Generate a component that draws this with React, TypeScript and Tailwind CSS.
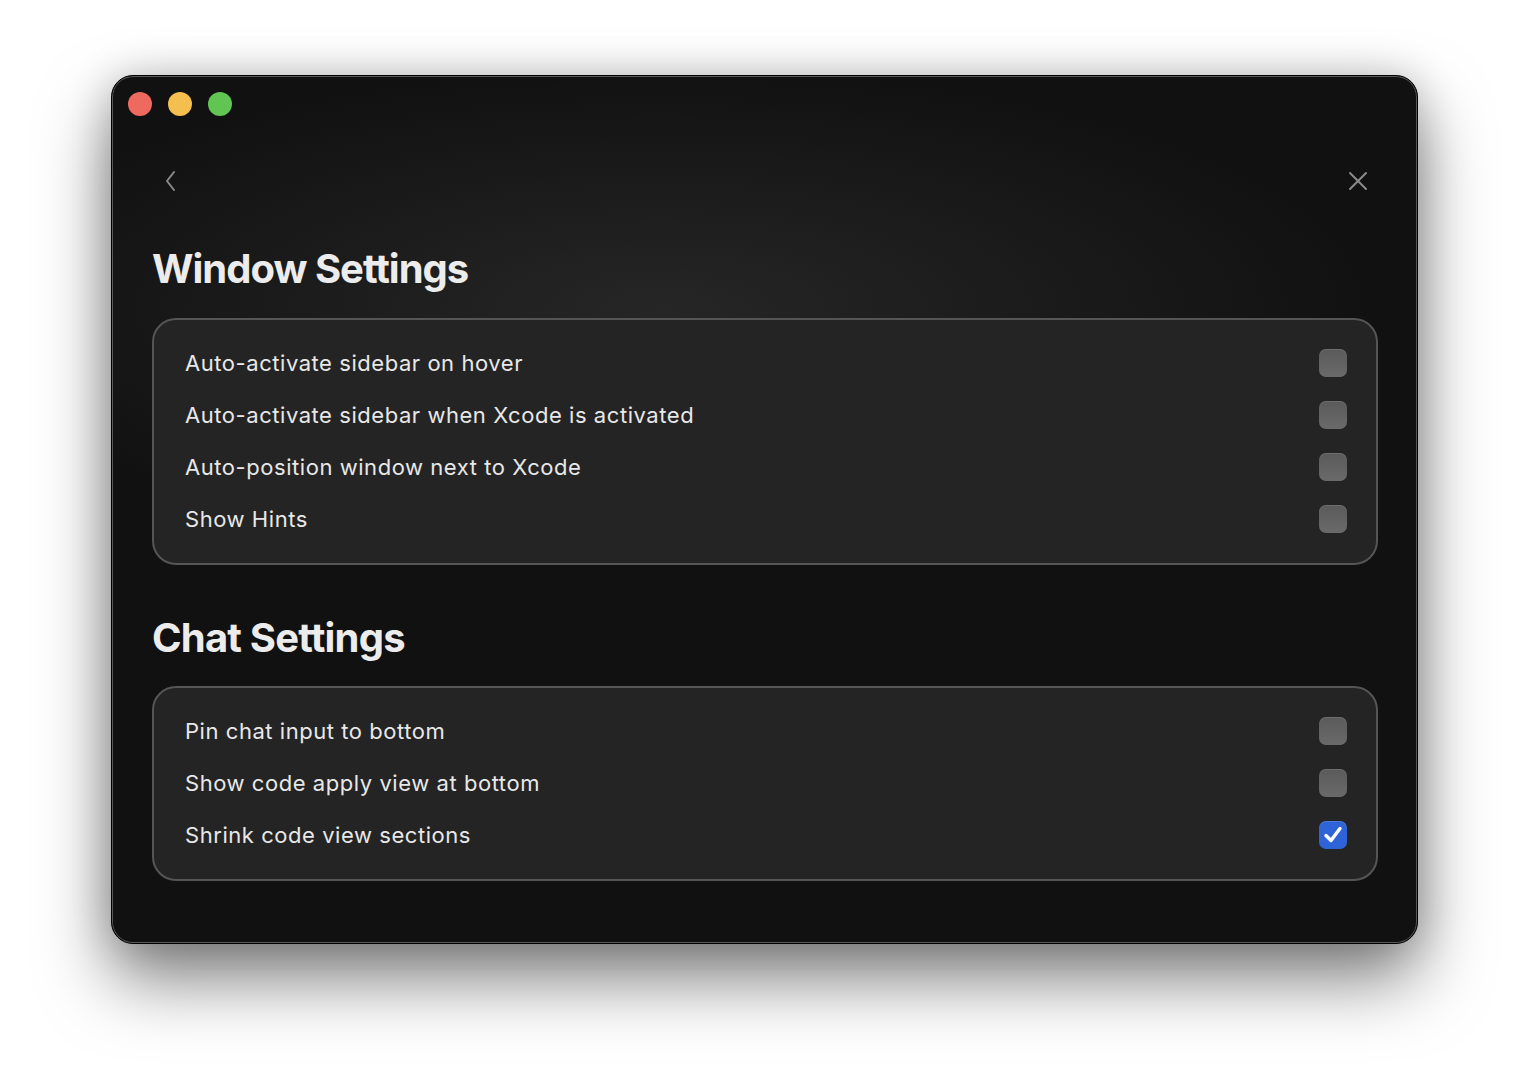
import { useState } from 'react'

// Settings window: macOS-style dark panel with two groups of checkboxes.
const WINDOW_OPTIONS = [
  { id: 'hover', label: 'Auto-activate sidebar on hover', on: false },
  { id: 'xcode', label: 'Auto-activate sidebar when Xcode is activated', on: false },
  { id: 'position', label: 'Auto-position window next to Xcode', on: false },
  { id: 'hints', label: 'Show Hints', on: false },
]

const CHAT_OPTIONS = [
  { id: 'pin', label: 'Pin chat input to bottom', on: false },
  { id: 'apply', label: 'Show code apply view at bottom', on: false },
  { id: 'shrink', label: 'Shrink code view sections', on: true },
]

type Option = { id: string; label: string; on: boolean }

function Checkbox({ checked, onClick }: { checked: boolean; onClick: () => void }) {
  if (checked) {
    return (
      <button
        onClick={onClick}
        className="flex h-[28px] w-[28px] items-center justify-center rounded-[7px] bg-[#2f63d8] shadow-[inset_0_1px_0_rgba(255,255,255,0.15)]"
      >
        <svg width="24" height="24" viewBox="0 0 24 24" fill="none">
          <path d="M5 12.5 L10 17.5 L19 5.5" stroke="white" strokeWidth="3.4" strokeLinecap="round" strokeLinejoin="round" />
        </svg>
      </button>
    )
  }
  return (
    <button
      onClick={onClick}
      className="h-[28px] w-[28px] rounded-[7px] bg-gradient-to-b from-[#5a5a5a] to-[#6a6a6a] shadow-[inset_0_1px_0_rgba(255,255,255,0.12)]"
    />
  )
}

function Group({ initial }: { initial: Option[] }) {
  const [items, setItems] = useState(initial)
  const toggle = (id: string) =>
    setItems((prev) => prev.map((o) => (o.id === id ? { ...o, on: !o.on } : o)))

  return (
    <div className="rounded-[24px] border-2 border-[#555555] bg-[#242424] pb-[18px] pl-[31px] pr-[29px] pt-[17px]">
      {items.map((o) => (
        <div key={o.id} className="flex h-[52px] items-center justify-between">
          <span className="text-[22px] tracking-[0.55px] text-[#e8e8e8]">{o.label}</span>
          <Checkbox checked={o.on} onClick={() => toggle(o.id)} />
        </div>
      ))}
    </div>
  )
}

export default function App() {
  return (
    <div
      className="min-h-[1092px] bg-white pl-[111px] pt-[75px]"
      style={{ fontFamily: 'Inter, "Noto Sans", sans-serif' }}
    >
      <div className="h-[869px] w-[1307px] overflow-hidden rounded-[22px] border border-black bg-[#111111] shadow-[0_35px_70px_rgba(0,0,0,0.5),0_0_40px_rgba(0,0,0,0.18)]">
        <div className="h-full rounded-[21px] bg-[radial-gradient(ellipse_55%_28%_at_42%_27%,#262626_0%,#111111_100%)] pl-[40px] pr-[39px] shadow-[inset_0_0_0_1px_rgba(255,255,255,0.3)]">
          {/* traffic lights */}
          <div className="-ml-[24px] flex gap-4 pt-[16px]">
            <span className="h-6 w-6 rounded-full bg-[#ee6a5f]" />
            <span className="h-6 w-6 rounded-full bg-[#f5bf4f]" />
            <span className="h-6 w-6 rounded-full bg-[#61c554]" />
          </div>

          <div className="mt-[45px] flex h-10 items-center justify-between pl-[9px] pr-[10px]">
            <svg width="20" height="24" viewBox="0 0 20 24" fill="none">
              <path d="M13 3 L6 12 L13 21" stroke="#8a8a8a" strokeWidth="2" strokeLinecap="round" strokeLinejoin="round" />
            </svg>
            <svg width="20" height="20" viewBox="0 0 20 20" fill="none">
              <path d="M2 2 L18 18 M18 2 L2 18" stroke="#8a8a8a" strokeWidth="2" strokeLinecap="round" />
            </svg>
          </div>

          <h1 className="mt-[44px] text-[40px] font-bold leading-[48px] tracking-[-1px] text-[#ececec]">Window Settings</h1>
          <div className="mt-[25px]">
            <Group initial={WINDOW_OPTIONS} />
          </div>

          <h1 className="mt-[49px] text-[40px] font-bold leading-[48px] tracking-[-0.8px] text-[#ececec]">Chat Settings</h1>
          <div className="mt-[24px]">
            <Group initial={CHAT_OPTIONS} />
          </div>
        </div>
      </div>
    </div>
  )
}
